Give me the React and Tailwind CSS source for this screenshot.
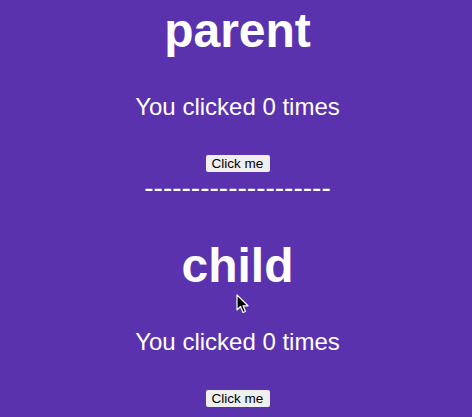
import React from "react";

function Cursor() {
  return (
    <svg
      className="absolute left-[236px] top-[294px]"
      width="14"
      height="20"
      viewBox="0 0 14 20"
    >
      <path
        d="M1 1 L1 16 L4.5 12.5 L7 18.5 L9.5 17.5 L7 11.8 L12 11.8 Z"
        fill="#000"
        stroke="#fff"
        strokeWidth="1.2"
        strokeLinejoin="round"
      />
    </svg>
  );
}

function Counter({ title, first }) {
  return (
    <>
      <h1
        className={`text-[48px] leading-[48px] font-bold ${first ? "mt-[7px]" : "mt-[40px]"}`}
      >
        {title}
      </h1>
      <p className="text-[24px] leading-[24px] mt-[40px]">You clicked 0 times</p>
      <button className="mt-[36px] h-[17px] w-[64px] bg-[#efefef] text-black text-[13.5px] leading-[17px] rounded-[2px]">
        Click me
      </button>
    </>
  );
}

export default function App() {
  return (
    <div
      className="relative w-full min-h-[417px] bg-[#5a32ad] text-white flex flex-col items-center overflow-hidden pl-[3px]"
      style={{ fontFamily: '"Liberation Sans", Arial, sans-serif' }}
    >
      <Counter title="parent" first />
      <div className="text-[28px] leading-[28px] mt-[2px]">--------------------</div>
      <Counter title="child" />
      <Cursor />
    </div>
  );
}
